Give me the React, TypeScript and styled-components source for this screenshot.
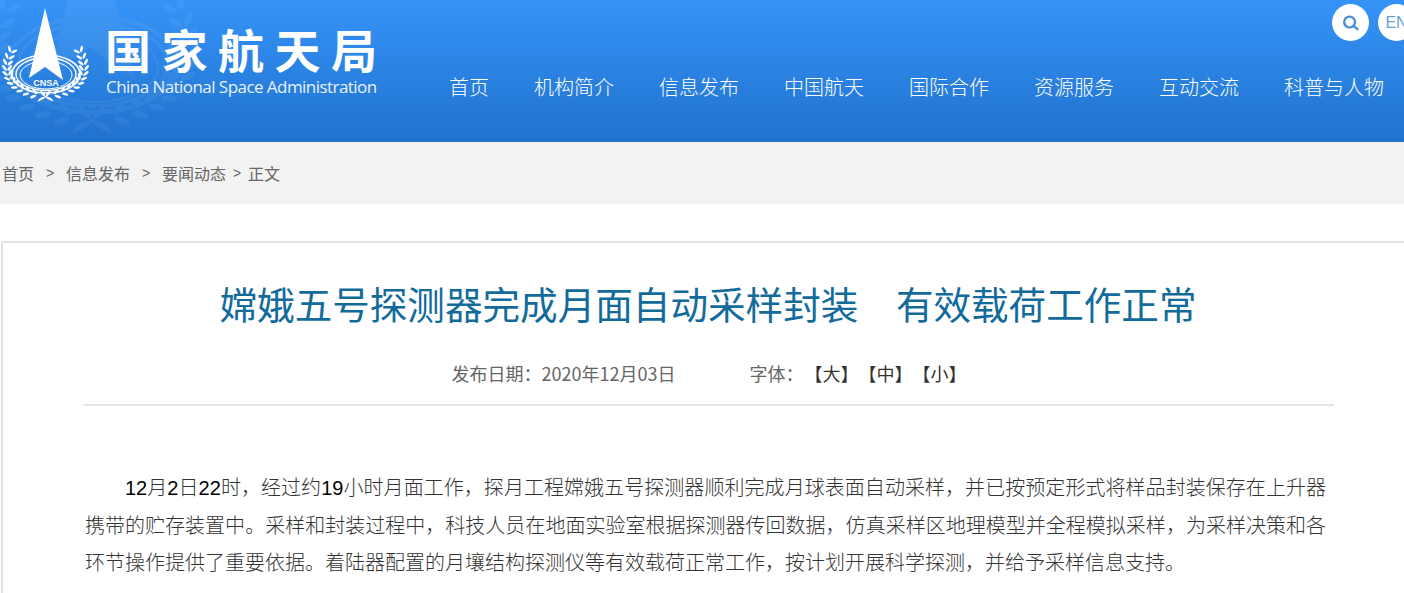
import React from "react";
import styled, { createGlobalStyle } from "styled-components";

const Global = createGlobalStyle`
  html, body { margin: 0; padding: 0; background: #fff; overflow: hidden; }
  body { width: 1404px; height: 593px; font-family: "Noto Sans CJK SC", sans-serif; }
`;
const Page = styled.div`width: 1420px; height: 593px; overflow: hidden;`;
const Header = styled.header`
  height: 142px; display: flex; position: relative; overflow: hidden;
  background: linear-gradient(180deg, #3593f8 0%, #2072cd 100%);
`;
const Watermark = styled.svg`position: absolute; left: -22px; top: -120px; opacity: .05;`;
const LogoBlock = styled.div`display: flex; width: 449px; flex: none; position: relative;`;
const LogoMark = styled.svg`flex: none; display: block;`;
const LogoText = styled.div`margin-left: 15px; padding-top: 23px; color: #fff;`;
const LogoCn = styled.div`
  font: 700 46px/50px "Noto Sans CJK SC", sans-serif; letter-spacing: 10.5px; white-space: nowrap; width: 290px; margin-left: -1px;
`;
const LogoEn = styled.div`
  font: 400 17px/22px "Open Sans", "Noto Sans", sans-serif; letter-spacing: -.55px; margin-top: 3px; white-space: nowrap;
  color: #e8f2ff;
`;
const HeaderRight = styled.div`flex: 1; position: relative;`;
const Tools = styled.div`display: flex; gap: 9px; padding: 4px 0 0 883px; height: 37px;`;
const Circle = styled.div`
  width: 37px; height: 37px; border-radius: 50%; background: #fff; flex: none;
  display: flex; align-items: center; justify-content: center; color: #6a9fdc;
  font: 400 16px/1 "Liberation Sans", sans-serif;
`;
const Nav = styled.nav`display: flex; gap: 45px; margin-top: 32px;`;
const NavItem = styled.a`
  font: 300 20px/28px "Noto Sans CJK SC", sans-serif; color: #fff; white-space: nowrap;
`;
const Crumbs = styled.div`
  height: 62px; background: #f2f2f2; display: flex; align-items: center; padding-left: 2px;
  font: 400 16px/20px "Noto Sans CJK SC", sans-serif; color: #666; white-space: nowrap;
`;
const Sep = styled.span<{ $w: number }>`
  font-family: "Liberation Sans", sans-serif; font-size: 14px; width: ${p => p.$w}px; text-align: center; flex: none;
`;
const Card = styled.article`
  margin: 37px 0 0 1px; width: 1416px; box-sizing: border-box; border: 2px solid #e3e3e6; border-bottom: 0;
  padding: 0 81px; height: 352px;
`;
const Title = styled.h1`
  margin: 34px 0 0; padding-right: 2px; font: 400 37.6px/52px "Noto Sans CJK SC", sans-serif; color: #126b9b; text-align: center; white-space: pre;
`;
const Meta = styled.div`
  margin-top: 29px; height: 46px; border-bottom: 2px solid #e5e5e5; display: flex; justify-content: center;
  font: 400 18px/30px "Noto Sans CJK SC", sans-serif; color: #666; white-space: nowrap; text-spacing-trim: space-all;
`;
const MetaDate = styled.span`margin-right: 74px;`;
const MetaFont = styled.span`margin-right: 1px;`;
const Sizes = styled.span`color: #333;`;
const Body = styled.div`margin-top: 64px; width: 1241px; margin-left: 1px;`;
const Para = styled.p`
  margin: 0; font: 300 20px/37.5px "Liberation Sans", "Noto Sans CJK SC", sans-serif;
  color: #333; text-indent: 40px; text-align: justify;
`;
const Num = styled.span`color: #000;`;

const nav = ["首页", "机构简介", "信息发布", "中国航天", "国际合作", "资源服务", "互动交流", "科普与人物"];

const laurel = Array.from({ length: 12 }, (_, i) => {
  const t = i / 11;
  const u = 1 - t;
  const x = u * u * 12 + 2 * u * t * -6 + t * t * 42;
  const y = u * u * 50 + 2 * u * t * 86 + t * t * 96;
  const dx = 2 * u * (-6 - 12) + 2 * t * (42 + 6);
  const dy = 2 * u * (86 - 50) + 2 * t * (96 - 86);
  const angle = (Math.atan2(dy, dx) * 180) / Math.PI;
  return { x, y, angle };
});

const Wreath = () => (
  <g fill="#fff">
    {laurel.map((l, i) => (
      <g key={i} transform={`translate(${l.x} ${l.y}) rotate(${l.angle})`}>
        <ellipse cx="-1.5" cy="-2.2" rx="3.3" ry="1.3" transform="rotate(38)" />
        <ellipse cx="-1.5" cy="2.2" rx="3.3" ry="1.3" transform="rotate(-38)" />
      </g>
    ))}
  </g>
);

const Emblem = ({ label }: { label?: boolean }) => (
  <>
    <g fill="none" stroke="#fff">
      <ellipse cx="46" cy="74" rx="34" ry="19" strokeWidth="1.7" />
      <ellipse cx="46" cy="74" rx="30" ry="16.5" strokeWidth="1.4" />
      <ellipse cx="46" cy="75" rx="26" ry="14" strokeWidth="1" />
    </g>
    <path d="M45 8 L63 80 L45 67 L29 78 Z" fill="#fff" />
    <Wreath />
    <g transform="matrix(-1 0 0 1 91 0)">
      <Wreath />
    </g>
    <path d="M38 101 L46 96.5 L53 101" stroke="#fff" strokeWidth="1.2" fill="none" />
    {label && (
      <text x="46" y="86" textAnchor="middle" fontFamily="Liberation Sans, sans-serif" fontSize="9" fontWeight="700" fill="#fff" stroke="#2a7fdc" strokeWidth="2" paintOrder="stroke">CNSA</text>
    )}
  </>
);

export default function App() {
  return (
    <Page>
      <Global />
      <Header>
        <Watermark width="225" height="262" viewBox="0 0 90 105">
          <Emblem />
        </Watermark>
        <LogoBlock>
          <LogoMark width="91" height="105" viewBox="0 0 91 105">
            <Emblem label />
          </LogoMark>
          <LogoText>
            <LogoCn>国家航天局</LogoCn>
            <LogoEn>China National Space Administration</LogoEn>
          </LogoText>
        </LogoBlock>
        <HeaderRight>
          <Tools>
            <Circle>
              <svg width="20" height="20" viewBox="0 0 20 20" fill="none" stroke="#4f8fd6" strokeWidth="2.4" strokeLinecap="round">
                <circle cx="8.6" cy="9" r="5.4" />
                <path d="M12.8 13.2 L16.4 16.2" />
              </svg>
            </Circle>
            <Circle>EN</Circle>
          </Tools>
          <Nav>
            {nav.map(n => <NavItem key={n}>{n}</NavItem>)}
          </Nav>
        </HeaderRight>
      </Header>
      <Crumbs>
        <span>首页</span>
        <Sep $w={32}>&gt;</Sep>
        <span>信息发布</span>
        <Sep $w={32}>&gt;</Sep>
        <span>要闻动态</span>
        <Sep $w={22}>&gt;</Sep>
        <span>正文</span>
      </Crumbs>
      <Card>
        <Title>{"嫦娥五号探测器完成月面自动采样封装　有效载荷工作正常"}</Title>
        <Meta>
          <MetaDate>发布日期：2020年12月03日</MetaDate>
          <MetaFont>字体：</MetaFont>
          <Sizes>【大】【中】【小】</Sizes>
        </Meta>
        <Body>
          <Para>
            <Num>12</Num>月<Num>2</Num>日<Num>22</Num>时，经过约<Num>19</Num>小时月面工作，探月工程嫦娥五号探测器顺利完成月球表面自动采样，并已按预定形式将样品封装保存在上升器携带的贮存装置中。采样和封装过程中，科技人员在地面实验室根据探测器传回数据，仿真采样区地理模型并全程模拟采样，为采样决策和各环节操作提供了重要依据。着陆器配置的月壤结构探测仪等有效载荷正常工作，按计划开展科学探测，并给予采样信息支持。
          </Para>
        </Body>
      </Card>
    </Page>
  );
}
